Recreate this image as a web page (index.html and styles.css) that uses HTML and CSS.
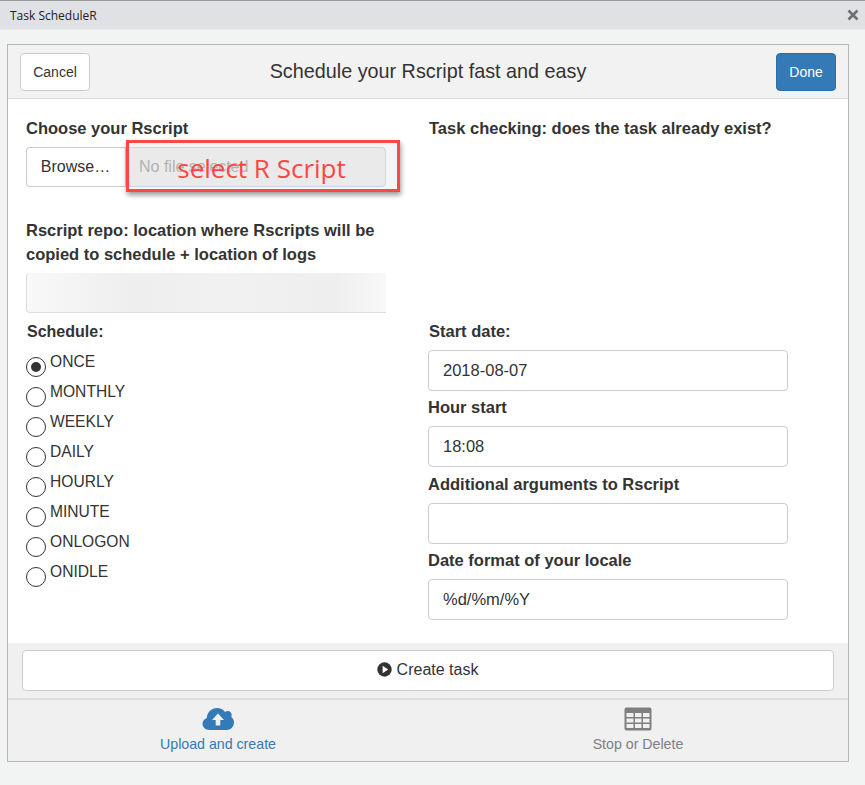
FILE: index.html
```html
<!DOCTYPE html>
<html lang="en">
<head>
    <meta charset="UTF-8">
    <meta name="viewport" content="width=device-width, initial-scale=1.0">
    <title>Task ScheduleR</title>
    <link rel="stylesheet" href="styles.css">
</head>
<body>

    <div class="titlebar">
        <span class="titlebar-name">Task ScheduleR</span>
        <svg class="titlebar-close" width="12" height="12" viewBox="0 0 12 12"><path d="M1.5 1.5l9 9M10.5 1.500l-9 9" stroke="#6f6f6f" stroke-width="2.6" fill="none"/></svg>
    </div>

    <div class="gadget">
        <header class="gadget-head">
            <button class="btn btn-cancel">Cancel</button>
            <h1>Schedule your Rscript fast and easy</h1>
            <button class="btn btn-done">Done</button>
        </header>

        <main class="gadget-body">
            <div class="col col-left">
                <label class="field-label label-first">Choose your Rscript</label>
                <div class="file-row">
                    <span class="file-browse">Browse&hellip;</span>
                    <span class="file-name">No file selected</span>
                </div>
                <label class="field-label label-repo">Rscript repo: location where Rscripts will be copied to schedule + location of logs</label>
                <div class="repo-input"></div>

                <label class="field-label label-schedule">Schedule:</label>
                <div class="radio-list">
                    <div class="radio-row"><span class="radio radio-on"></span><span>ONCE</span></div>
                    <div class="radio-row"><span class="radio"></span><span>MONTHLY</span></div>
                    <div class="radio-row"><span class="radio"></span><span>WEEKLY</span></div>
                    <div class="radio-row"><span class="radio"></span><span>DAILY</span></div>
                    <div class="radio-row"><span class="radio"></span><span>HOURLY</span></div>
                    <div class="radio-row"><span class="radio"></span><span>MINUTE</span></div>
                    <div class="radio-row"><span class="radio"></span><span>ONLOGON</span></div>
                    <div class="radio-row"><span class="radio"></span><span>ONIDLE</span></div>
                </div>
            </div>

            <div class="col col-right">
                <label class="field-label label-first label-task">Task checking: does the task already exist?</label>
                <label class="field-label label-start">Start date:</label>
                <div class="text-input">2018-08-07</div>
                <label class="field-label label-next">Hour start</label>
                <div class="text-input">18:08</div>
                <label class="field-label label-next label-args">Additional arguments to Rscript</label>
                <div class="text-input"></div>
                <label class="field-label label-next">Date format of your locale</label>
                <div class="text-input">%d/%m/%Y</div>
            </div>

            <div class="callout"><span class="callout-text">select R Script</span></div>
        </main>

        <div class="create-bar">
            <button class="btn-create">
                <svg width="15" height="15" viewBox="0 0 15 15"><circle cx="7.5" cy="7.5" r="7.2" fill="#333"/><path d="M5.6 3.8l5.6 3.7-5.6 3.7z" fill="#fff"/></svg>
                Create task
            </button>
        </div>

        <nav class="tabs">
            <a class="tab tab-active">
                <svg width="32" height="24" viewBox="0 0 32 24"><path d="M7.5 23C3.500 23 .5 20.200.5 16.800c0-2.800 1.800-5 4.300-5.900C5.200 5.200 9.600 1 15 1c3.400 0 6.300 1.500 8.100 4.100.8-.7 1.700-1 2.600-1 2.300 0 4 1.800 4 4 0 .7-.2 1.400-.5 2 1.700 1.100 2.800 3.100 2.800 5.200 0 4.300-3.100 7.700-7 7.700z" fill="#337ab7"/><path d="M16 6.500l6 6.500h-3.700v5.500h-4.600V13H10z" fill="#f0f0f0"/></svg>
                <span>Upload and create</span>
            </a>
            <a class="tab">
                <svg width="28" height="24" viewBox="0 0 28 24"><rect x="0.500" y="0.500" width="27" height="23" rx="2" fill="#7f7f7f"/><g fill="#f0f0f0"><rect x="2.500" y="6" width="7" height="4"/><rect x="11" y="6" width="6.500" height="4"/><rect x="19" y="6" width="6.500" height="4"/><rect x="2.500" y="11.500" width="7" height="4"/><rect x="11" y="11.500" width="6.500" height="4"/><rect x="19" y="11.500" width="6.500" height="4"/><rect x="2.500" y="17" width="7" height="4"/><rect x="11" y="17" width="6.500" height="4"/><rect x="19" y="17" width="6.500" height="4"/></g></svg>
                <span>Stop or Delete</span>
            </a>
        </nav>
    </div>

</body>
</html>
```

FILE: styles.css
```css
body {
    font-family: "Liberation Sans", Arial, sans-serif;
    margin: 0;
    padding: 0;
    background-color: #f2f3f3;
    color: #333;
    font-size: 16.5px;
}

.titlebar {
    display: flex;
    align-items: center;
    justify-content: space-between;
    height: 28px;
    padding: 0 6px 0 10px;
    background-color: #e0e1e5;
    border-top: 1px solid #9a9a9a;
    border-bottom: 1px solid #eaeaea;
}

.titlebar-name {
    font-family: "Open Sans", sans-serif;
    font-size: 12px;
    color: #222;
    padding-top: 1px;
}

.gadget {
    width: 840px;
    height: 716px;
    margin: 14px 0 0 7px;
    border: 1px solid #b7b7b7;
    background-color: #fff;
    display: flex;
    flex-direction: column;
}

.gadget-head {
    display: grid;
    grid-template-columns: 1fr auto 1fr;
    align-items: center;
    height: 53px;
    padding: 0 12px;
    background-color: #f2f2f2;
    border-bottom: 1px solid #ddd;
}

.gadget-head h1 {
    margin: 0;
    font-size: 19.8px;
    font-weight: normal;
}

.btn {
    height: 38px;
    font-family: inherit;
    font-size: 14px;
    border-radius: 4px;
    border: 1px solid #ccc;
}

.btn-cancel {
    width: 70px;
    background-color: #fff;
    color: #333;
}

.btn-done {
    width: 60px;
    justify-self: end;
    background-color: #337ab7;
    border-color: #2e6da4;
    color: #fff;
}

.gadget-body {
    position: relative;
    flex: 1;
    display: flex;
    padding-left: 18px;
    gap: 42px;
}

.col {
    width: 360px;
}

.field-label {
    display: block;
    font-weight: bold;
    line-height: 25px;
}

.label-first {
    margin-top: 17px;
}

.file-row {
    display: flex;
    height: 40px;
    margin-top: 6px;
    font-size: 16px;
}

.file-browse {
    display: flex;
    align-items: center;
    justify-content: center;
    width: 99px;
    padding-right: 1px;
    box-sizing: border-box;
    border: 1px solid #ccc;
    border-right: none;
    border-radius: 4px 0 0 4px;
}

.file-name {
    flex: 1;
    display: flex;
    align-items: center;
    padding-left: 13px;
    color: #999;
    background-color: #eee;
    border: 1px solid #ccc;
    border-radius: 0 4px 4px 0;
}

.label-repo {
    margin-top: 31px;
    line-height: 24px;
}

.repo-input {
    height: 39px;
    margin-top: 7px;
    border: 1px solid #ddd;
    border-width: 0 0 1px 1px;
    border-radius: 4px 0 0 4px;
    background: linear-gradient(90deg, #f8f8f8, #eeeeee 30%, #f1f1f1 55%, #eeeeee 85%, #f8f8f8);
}

.label-schedule {
    margin: 6px 0 0 1px;
    font-size: 16px;
}

.radio-list {
    margin-top: 8px;
    font-size: 15.6px;
}

.radio-row {
    display: flex;
    height: 30px;
    gap: 4px;
    line-height: 20px;
}

.radio {
    width: 18px;
    height: 18px;
    margin-top: 5px;
    border: 1px solid #333;
    border-radius: 50%;
    background-color: #fff;
    position: relative;
}

.radio-on::after {
    content: "";
    position: absolute;
    left: 4px;
    top: 4px;
    width: 10px;
    height: 10px;
    border-radius: 50%;
    background-color: #333;
}

.label-task {
    margin-left: 1px;
}

.label-start {
    margin: 178px 0 0 1px;
}

.label-next {
    margin-top: 4px;
}

.label-args {
    margin-top: 5px;
}

.text-input {
    box-sizing: border-box;
    height: 41px;
    margin-top: 6px;
    padding: 0 14px;
    line-height: 39px;
    border: 1px solid #ccc;
    border-radius: 4px;
}

.callout {
    position: absolute;
    left: 118px;
    top: 41px;
    box-sizing: border-box;
    width: 274px;
    height: 52px;
    padding: 3px 3px 0 0;
    display: flex;
    align-items: center;
    justify-content: center;
    border: 3px solid #ff4646;
    background-color: rgba(225, 225, 225, 0.35);
    box-shadow: 1px 3px 5px rgba(0, 0, 0, 0.4);
}

.callout-text {
    font-family: "Open Sans", sans-serif;
    font-size: 26px;
    color: #ff4646;
}

.create-bar {
    height: 57px;
    padding: 7px 14px 0;
    box-sizing: border-box;
    background-color: #f0f0f0;
    border-bottom: 2px solid #ddd;
}

.btn-create {
    display: flex;
    align-items: center;
    justify-content: center;
    gap: 5px;
    width: 100%;
    height: 41px;
    padding: 0 7px 2px 6px;
    font-family: inherit;
    font-size: 16px;
    color: #333;
    background-color: #fff;
    border: 1px solid #ccc;
    border-radius: 4px;
}

.tabs {
    display: flex;
    height: 61px;
    background-color: #f0f0f0;
}

.tab {
    width: 420px;
    display: flex;
    flex-direction: column;
    align-items: center;
    padding-top: 7px;
    font-size: 14.2px;
    color: #7f7f7f;
}

.tab svg {
    margin-bottom: 5px;
}

.tab-active {
    color: #337ab7;
}
```
